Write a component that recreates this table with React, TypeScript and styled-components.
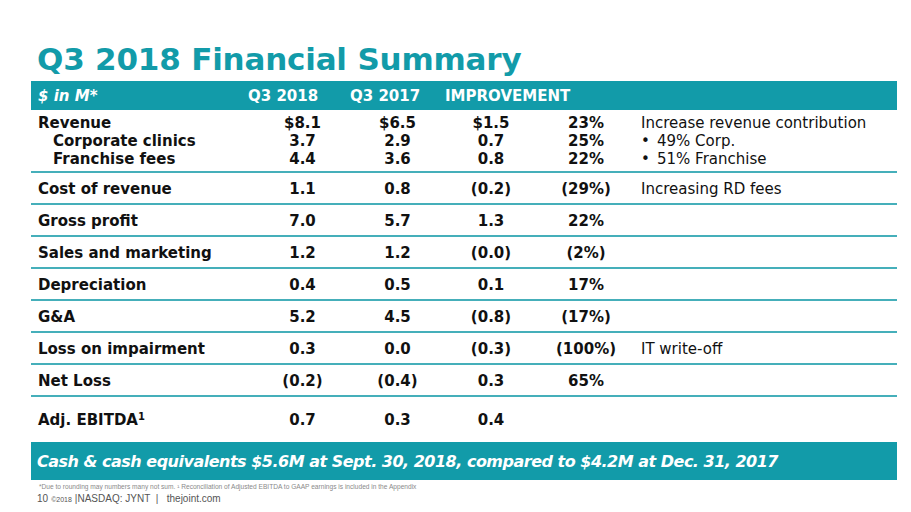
import React from "react";
import styled, { createGlobalStyle } from "styled-components";

const TEAL = "#129ba9";
const LINE = "#45afba";

const Global = createGlobalStyle`
  html, body { margin: 0; padding: 0; background: #fff; }
  body { font-family: "DejaVu Sans", Verdana, sans-serif; color: #111; }
`;

const Slide = styled.div`
  width: 911px;
  height: 512px;
  box-sizing: border-box;
  padding: 0 14px 0 31px;
  overflow: hidden;
  display: flex;
  flex-direction: column;
`;

const Title = styled.h1`
  margin: 0;
  padding: 41px 0 0 6px;
  height: 81px;
  flex: none;
  box-sizing: border-box;
  font-size: 31px;
  line-height: 36px;
  letter-spacing: -0.2px;
  font-weight: bold;
  color: ${TEAL};
  white-space: nowrap;
`;

const HeaderBar = styled.div`
  display: grid;
  grid-template-columns: 217px 102px 95px 1fr;
  align-items: center;
  height: 29px;
  flex: none;
  background: ${TEAL};
  color: #fff;
  font-size: 15px;
  font-weight: bold;
`;

const HeadCell = styled.div<{ $italic?: boolean }>`
  padding-left: ${(p) => (p.$italic ? "7px" : "0")};
  font-style: ${(p) => (p.$italic ? "italic" : "normal")};
  white-space: nowrap;
`;

const Row = styled.div<{ $h: number; $line?: boolean; $pt?: number; $pb?: number }>`
  display: grid;
  grid-template-columns: 224px 95px 95px 92px 98px 1fr;
  align-content: center;
  height: ${(p) => p.$h}px;
  flex: none;
  box-sizing: border-box;
  padding: ${(p) => p.$pt ?? 0}px 0 ${(p) => p.$pb ?? 0}px;
  border-bottom: ${(p) => (p.$line ? `2px solid ${LINE}` : "none")};
  font-size: 15px;
  line-height: 18px;
`;

const Label = styled.div<{ $indent?: boolean }>`
  font-weight: bold;
  padding-left: ${(p) => (p.$indent ? "22px" : "7px")};
  white-space: nowrap;
`;

const Num = styled.div`
  font-weight: bold;
  text-align: center;
  white-space: nowrap;
`;

const Note = styled.div`
  padding-left: 6px;
  white-space: nowrap;
  display: flex;
`;

const Bullet = styled.span`
  display: inline-block;
  width: 16px;
`;

const Sup = styled.sup`
  font-size: 10px;
  line-height: 0;
  vertical-align: 5px;
`;

const CashBar = styled.div`
  height: 38px;
  flex: none;
  background: ${TEAL};
  display: flex;
  align-items: center;
  padding-left: 6px;
  color: #fff;
  font-size: 16px;
  letter-spacing: -0.5px;
  font-weight: bold;
  font-style: italic;
  white-space: nowrap;
`;

const Footnote = styled.div`
  padding: 3px 0 0 8px;
  font-family: "Liberation Sans", Arial, sans-serif;
  font-size: 6.6px;
  line-height: 8px;
  color: #8a8a8a;
  white-space: nowrap;
`;

const Footer = styled.div`
  padding: 1px 0 0 6px;
  font-family: "Liberation Sans", Arial, sans-serif;
  font-size: 10px;
  line-height: 14px;
  color: #555;
  white-space: nowrap;
  display: flex;
  align-items: baseline;
  gap: 3px;
`;

const Small = styled.span`
  font-size: 7px;
`;

type R = { label: React.ReactNode; v: string[]; note?: string };

const singles: R[] = [
  { label: "Cost of revenue", v: ["1.1", "0.8", "(0.2)", "(29%)"], note: "Increasing RD fees" },
  { label: "Gross profit", v: ["7.0", "5.7", "1.3", "22%"] },
  { label: "Sales and marketing", v: ["1.2", "1.2", "(0.0)", "(2%)"] },
  { label: "Depreciation", v: ["0.4", "0.5", "0.1", "17%"] },
  { label: "G&A", v: ["5.2", "4.5", "(0.8)", "(17%)"] },
  { label: "Loss on impairment", v: ["0.3", "0.0", "(0.3)", "(100%)"], note: "IT write-off" },
  { label: "Net Loss", v: ["(0.2)", "(0.4)", "0.3", "65%"] },
];

export default function App() {
  return (
    <Slide>
      <Global />
      <Title>Q3 2018 Financial Summary</Title>
      <HeaderBar>
        <HeadCell $italic>$ in M*</HeadCell>
        <HeadCell>Q3 2018</HeadCell>
        <HeadCell>Q3 2017</HeadCell>
        <HeadCell>IMPROVEMENT</HeadCell>
      </HeaderBar>

      <Row $h={63} $line $pt={5} $pb={4}>
        <Label>Revenue</Label>
        <Num>$8.1</Num>
        <Num>$6.5</Num>
        <Num>$1.5</Num>
        <Num>23%</Num>
        <Note>Increase revenue contribution</Note>

        <Label $indent>Corporate clinics</Label>
        <Num>3.7</Num>
        <Num>2.9</Num>
        <Num>0.7</Num>
        <Num>25%</Num>
        <Note>
          <Bullet>•</Bullet>49% Corp.
        </Note>

        <Label $indent>Franchise fees</Label>
        <Num>4.4</Num>
        <Num>3.6</Num>
        <Num>0.8</Num>
        <Num>22%</Num>
        <Note>
          <Bullet>•</Bullet>51% Franchise
        </Note>
      </Row>

      {singles.map((r, i) => (
        <Row key={i} $h={32} $line $pt={1}>
          <Label>{r.label}</Label>
          {r.v.map((x, j) => (
            <Num key={j}>{x}</Num>
          ))}
          <Note>{r.note ?? ""}</Note>
        </Row>
      ))}

      <Row $h={45}>
        <Label>
          Adj. EBITDA<Sup>1</Sup>
        </Label>
        <Num>0.7</Num>
        <Num>0.3</Num>
        <Num>0.4</Num>
        <Num />
        <Note />
      </Row>

      <CashBar>
        Cash &amp; cash equivalents $5.6M at Sept. 30, 2018, compared to $4.2M at Dec. 31, 2017
      </CashBar>
      <Footnote>
        *Due to rounding may numbers many not sum. ¹ Reconciliation of Adjusted EBITDA to GAAP earnings is included in the Appendix
      </Footnote>
      <Footer>
        <span>10</span>
        <Small>©2018</Small>
        <span>|NASDAQ: JYNT&nbsp;&nbsp;|&nbsp;&nbsp;&nbsp;thejoint.com</span>
      </Footer>
    </Slide>
  );
}
